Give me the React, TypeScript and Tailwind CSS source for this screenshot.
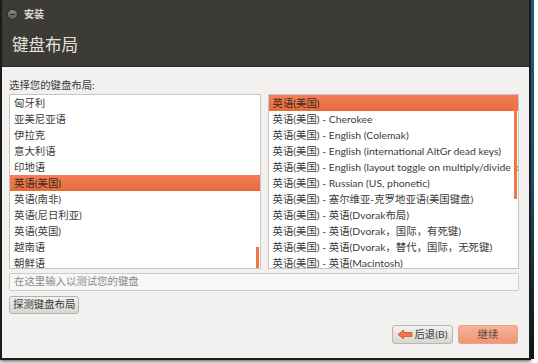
import { clsx } from 'clsx'

const leftItems = ['匈牙利', '亚美尼亚语', '伊拉克', '意大利语', '印地语', '英语(美国)', '英语(南非)', '英语(尼日利亚)', '英语(英国)', '越南语', '朝鲜语']

const rightItems = [
  '英语(美国)',
  '英语(美国) - Cherokee',
  '英语(美国) - English (Colemak)',
  '英语(美国) - English (international AltGr dead keys)',
  '英语(美国) - English (layout toggle on multiply/divide key)',
  '英语(美国) - Russian (US, phonetic)',
  '英语(美国) - 塞尔维亚-克罗地亚语(美国键盘)',
  '英语(美国) - 英语(Dvorak布局)',
  '英语(美国) - 英语(Dvorak，国际，有死键)',
  '英语(美国) - 英语(Dvorak，替代，国际，无死键)',
  '英语(美国) - 英语(Macintosh)',
]

function ListBox({ items, selected, bar }: { items: string[]; selected: number; bar: string }) {
  return (
    <div className="relative h-[175px] flex-1 overflow-hidden border border-[#c8c6c2] bg-white">
      {items.map((it, i) => (
        <div
          key={i}
          className={clsx(
            'h-4 whitespace-nowrap pl-[4px] text-[10.4px] leading-4',
            i === selected ? 'bg-gradient-to-b from-[#f28055] to-[#e66b3a] text-[#3a2a20]' : 'text-[#3c3c3c]'
          )}
        >
          {it}
        </div>
      ))}
      <div className={clsx('absolute right-[1px] w-[3px] bg-[#f07746]', bar)} />
    </div>
  )
}

export default function App() {
  return (
    <div className="relative h-[363px] w-[538px] overflow-hidden bg-white font-['Lato','Noto_Sans_CJK_SC',sans-serif]">
      <div className="absolute left-[531px] top-0 h-[359px] w-[3px] bg-gradient-to-b from-[#1f5a78] via-[#1d4f6a] to-[#111]" />
      <div className="flex h-[360px] w-[531px] flex-col border-x-2 border-b-2 border-[#1c1c1c] bg-[#f2f1f0] shadow-[0_2px_3px_rgba(0,0,0,0.5)]">
        <div className="flex h-[67px] flex-col bg-[#3c3b37] border-b border-[#2a2927]">
          <div className="flex h-[25px] items-center gap-[6px] pl-[5px] pt-[3px]">
            <div className="flex h-[11px] w-[11px] items-center justify-center rounded-full bg-gradient-to-b from-[#8a8984] to-[#5d5c58] border border-[#2d2c29]">
              <div className="h-[1px] w-[5px] bg-[#2f2e2b]" />
            </div>
            <span className="text-[10px] font-bold text-[#dfdbd2]">安装</span>
          </div>
          <div className="pl-[10px] pt-[9px] text-[16.5px] leading-[22px] text-[#e6e3dc]">键盘布局</div>
        </div>
        <div className="flex flex-1 flex-col pl-[7px] pr-[10px]">
          <div className="pt-[11px] text-[10.4px] leading-[14px] text-[#3c3c3c]">选择您的键盘布局:</div>
          <div className="mt-[2px] flex gap-[7px]">
            <ListBox items={leftItems} selected={5} bar="bottom-0 h-[21px]" />
            <ListBox items={rightItems} selected={0} bar="top-0 h-[104px]" />
          </div>
          <div className="mt-[4px] flex h-[18px] items-center rounded-[2px] border border-[#cfcdc9] bg-[#f7f7f6] pl-[4px] text-[10.4px] text-[#8a8a8a]">
            在这里输入以测试您的键盘
          </div>
          <div className="mt-[5px] flex">
            <div className="flex h-[18px] items-center rounded-[3px] border border-[#b3b1ac] bg-gradient-to-b from-[#f1f0ee] to-[#d8d6d2] px-[3px] text-[10.4px] text-[#3c3c3c]">
              探测键盘布局
            </div>
          </div>
          <div className="mt-[11px] flex justify-end gap-[5px]">
            <div className="flex h-[19px] w-[61px] items-center justify-center rounded-[3px] border border-[#b8b6b1] bg-gradient-to-b from-[#f3f2f0] to-[#d9d7d3] text-[10.4px] text-[#3c3c3c]">
              <svg width="16" height="11" viewBox="0 0 16 11" className="mr-[1px]">
                <path d="M1 5.5 L6.5 1 L6.5 3.5 L15 3.5 L15 7.5 L6.5 7.5 L6.5 10 Z" fill="#f07746" stroke="#c9541f" strokeWidth="0.8" />
              </svg>
              后退(B)
            </div>
            <div className="mr-[1px] flex h-[19px] w-[60px] items-center justify-center rounded-[3px] border border-[#e9a283] bg-gradient-to-b from-[#f7b298] to-[#ef9574] text-[10.4px] text-[#5a4a42]">
              继续
            </div>
          </div>
        </div>
      </div>
    </div>
  )
}
